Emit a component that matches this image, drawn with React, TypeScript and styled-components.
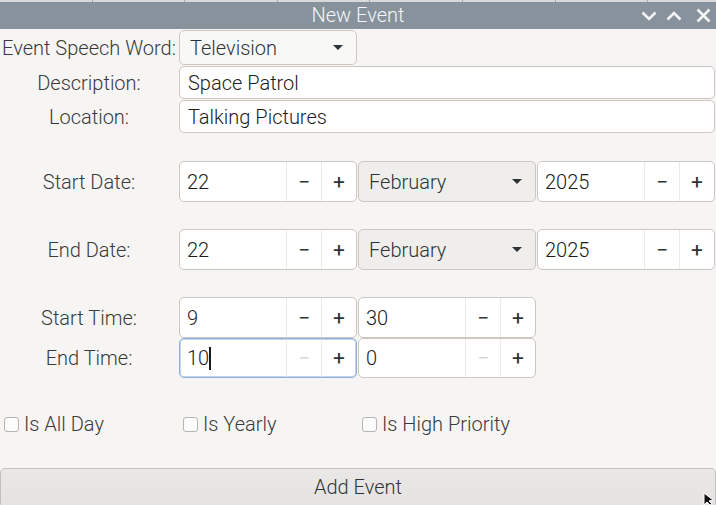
import React from "react";
import styled, { createGlobalStyle, css } from "styled-components";

const Global = createGlobalStyle`
  html, body { margin: 0; padding: 0; background: #f6f5f4; }
  body { font-family: Roboto, "Noto Sans", sans-serif; color: #2e3436; }
  * { box-sizing: border-box; }
`;

const Window = styled.div`
  position: relative;
  width: 716px;
  height: 505px;
  overflow: hidden;
  background: #f6f5f4;
`;

const BackStrip = styled.div`
  height: 2px;
  display: flex;
  background: #d9d9d9;
`;

const BackTab = styled.div`
  width: 92.6px;
  border-right: 1px solid #a9a9a9;
`;

const TitleBar = styled.div`
  height: 27px;
  background: #87929c;
  display: flex;
  align-items: center;
  justify-content: center;
  position: relative;
`;

const Title = styled.div`
  color: #f4f5f6;
  font-size: 20px;
  font-weight: 300;
  line-height: 27px;
`;

const Controls = styled.div`
  position: absolute;
  right: 5px;
  top: 0;
  height: 27px;
  display: flex;
  align-items: center;
`;

const Form = styled.div`
  display: flex;
  flex-direction: column;
`;

const Row = styled.div<{ $h: number; $top?: number }>`
  display: grid;
  grid-template-columns: repeat(4, 178px);
  column-gap: 1px;
  height: ${(p) => p.$h}px;
  margin-top: ${(p) => p.$top ?? 0}px;
  align-items: start;
`;

const Label = styled.div<{ $h: number }>`
  height: ${(p) => p.$h}px;
  display: flex;
  align-items: center;
  justify-content: center;
  font-size: 20px;
  font-weight: 300;
  color: #3a3a3a;
  white-space: nowrap;
`;

const boxBase = css`
  border: 1px solid #cdc7c2;
  border-radius: 5px;
  font-size: 20px;
  font-weight: 300;
  color: #1c1c1c;
`;

const Entry = styled.div<{ $h: number }>`
  ${boxBase};
  grid-column: 2 / 5;
  height: ${(p) => p.$h}px;
  background: #fff;
  display: flex;
  align-items: center;
  padding-left: 8px;
`;

const Combo = styled.div<{ $h: number; $light?: boolean }>`
  ${boxBase};
  height: ${(p) => p.$h}px;
  background: ${(p) => (p.$light ? "#f8f8f7" : "#efeeec")};
  display: flex;
  align-items: center;
  justify-content: space-between;
  padding: 0 13px 0 10px;
  color: #2e3436;
`;

const Arrow = styled.span`
  width: 0;
  height: 0;
  border-left: 5px solid transparent;
  border-right: 5px solid transparent;
  border-top: 5px solid #2e3436;
`;

const Spin = styled.div<{ $h: number; $focus?: boolean }>`
  ${boxBase};
  height: ${(p) => p.$h}px;
  background: #fff;
  display: grid;
  grid-template-columns: 1fr 35px 35px;
  border-color: ${(p) => (p.$focus ? "#8fb0dc" : "#cdc7c2")};
  box-shadow: ${(p) => (p.$focus ? "inset 0 0 0 1px #c3d4ec" : "none")};
`;

const SpinText = styled.div`
  display: flex;
  align-items: center;
  padding-left: 7px;
`;

const Caret = styled.span`
  display: inline-block;
  width: 2px;
  height: 23px;
  background: #1a1a1a;
`;

const SpinBtn = styled.div<{ $disabled?: boolean }>`
  border-left: 1px solid #ebebeb;
  display: flex;
  align-items: center;
  justify-content: center;
  font-size: 21px;
  font-weight: 400;
  color: ${(p) => (p.$disabled ? "#d8d8d8" : "#2e3436")};
`;

const CheckCell = styled.label`
  display: flex;
  align-items: center;
  height: 38px;
  padding-left: 4px;
  font-size: 20px;
  font-weight: 300;
  color: #3a3a3a;
`;

const Box = styled.span`
  width: 15px;
  height: 15px;
  border: 1px solid #b7b4b0;
  border-radius: 3px;
  background: #fcfcfc;
  margin-right: 5px;
`;

const AddButton = styled.div`
  margin-top: 25px;
  height: 40px;
  border: 1px solid #c3bfba;
  border-radius: 5px;
  background: linear-gradient(#e9e8e6, #e4e3e1);
  display: flex;
  justify-content: center;
  padding-top: 6px;
  font-size: 20px;
  font-weight: 300;
  color: #333;
`;

const Pointer = styled.svg`
  position: absolute;
  right: 0;
  bottom: 0;
`;

const IconSvg = styled.svg<{ $ml: number }>`
  margin-left: ${(p) => p.$ml}px;
  display: block;
`;

const Chevron = ({ up, ml }: { up?: boolean; ml: number }) => (
  <IconSvg $ml={ml} width="16" height="10" viewBox="0 0 16 10">
    <polyline
      points={up ? "1.5,8.5 8,2 14.5,8.5" : "1.5,1.5 8,8 14.5,1.5"}
      fill="none"
      stroke="#f4f5f6"
      strokeWidth="2.6"
    />
  </IconSvg>
);

const Close = ({ ml }: { ml: number }) => (
  <IconSvg $ml={ml} width="15" height="15" viewBox="0 0 15 15">
    <path d="M1.5 1.5 L13.5 13.5 M13.5 1.5 L1.5 13.5" stroke="#f4f5f6" strokeWidth="2.6" />
  </IconSvg>
);

const SpinButton = ({
  value,
  h,
  focus,
  minusDisabled,
}: {
  value: string;
  h: number;
  focus?: boolean;
  minusDisabled?: boolean;
}) => (
  <Spin $h={h} $focus={focus}>
    <SpinText>
      {value}
      {focus && <Caret />}
    </SpinText>
    <SpinBtn $disabled={minusDisabled}>−</SpinBtn>
    <SpinBtn>+</SpinBtn>
  </Spin>
);

export default function App() {
  return (
    <Window>
      <Global />
      <BackStrip>
        {Array.from({ length: 7 }).map((_, i) => (
          <BackTab key={i} />
        ))}
      </BackStrip>
      <TitleBar>
        <Title>New Event</Title>
        <Controls>
          <Chevron ml={0} />
          <Chevron up ml={9} />
          <Close ml={14} />
        </Controls>
      </TitleBar>
      <Form>
        <Row $h={36} $top={1}>
          <Label $h={35}>Event Speech Word:</Label>
          <Combo $h={35} $light>
            Television
            <Arrow />
          </Combo>
        </Row>
        <Row $h={34}>
          <Label $h={33}>Description:</Label>
          <Entry $h={33}>Space Patrol</Entry>
        </Row>
        <Row $h={34}>
          <Label $h={33}>Location:</Label>
          <Entry $h={33}>Talking Pictures</Entry>
        </Row>
        <Row $h={41} $top={27}>
          <Label $h={41}>Start Date:</Label>
          <SpinButton value="22" h={41} />
          <Combo $h={41}>
            February
            <Arrow />
          </Combo>
          <SpinButton value="2025" h={41} />
        </Row>
        <Row $h={41} $top={27}>
          <Label $h={41}>End Date:</Label>
          <SpinButton value="22" h={41} />
          <Combo $h={41}>
            February
            <Arrow />
          </Combo>
          <SpinButton value="2025" h={41} />
        </Row>
        <Row $h={41} $top={27}>
          <Label $h={41}>Start Time:</Label>
          <SpinButton value="9" h={41} />
          <SpinButton value="30" h={41} />
        </Row>
        <Row $h={40}>
          <Label $h={40}>End Time:</Label>
          <SpinButton value="10" h={40} focus minusDisabled />
          <SpinButton value="0" h={40} minusDisabled />
        </Row>
        <Row $h={38} $top={27}>
          <CheckCell>
            <Box />
            Is All Day
          </CheckCell>
          <CheckCell>
            <Box />
            Is Yearly
          </CheckCell>
          <CheckCell>
            <Box />
            Is High Priority
          </CheckCell>
        </Row>
        <AddButton>Add Event</AddButton>
      </Form>
      <Pointer width="14" height="12" viewBox="0 0 14 12">
        <path d="M2 0 L2 12 L5 9 L8 12 L10 11 L7 8 L11 7 Z" fill="#111" stroke="#fff" strokeWidth="1" />
      </Pointer>
    </Window>
  );
}
